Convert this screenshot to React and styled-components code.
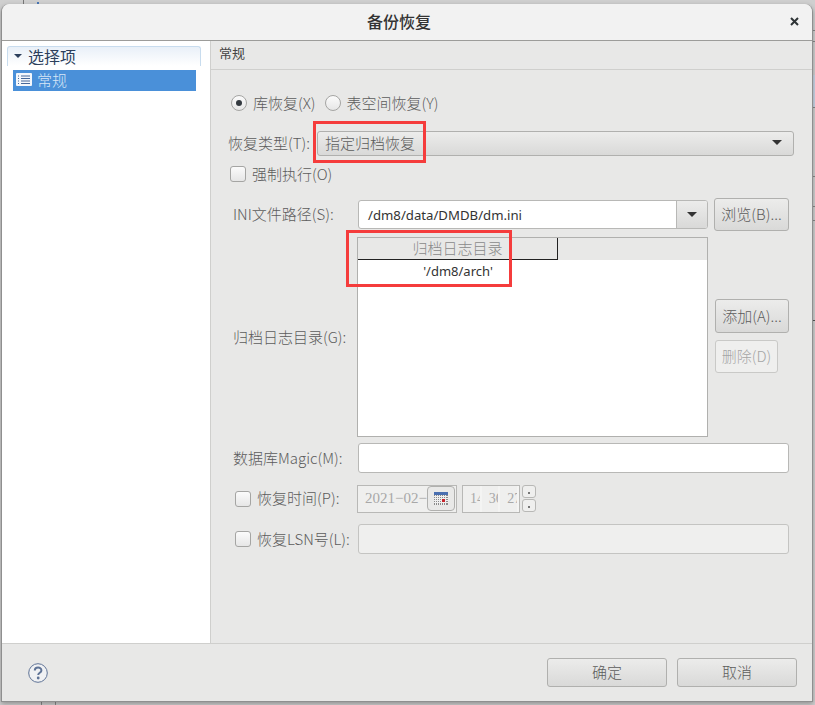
import React from 'react';
import styled, { createGlobalStyle } from 'styled-components';

const FONT = '"Noto Sans CJK SC", "Noto Sans", sans-serif';

const GlobalStyle = createGlobalStyle`
  html, body {
    margin: 0;
    padding: 0;
    width: 815px;
    height: 705px;
    overflow: hidden;
    background: #cfcfcf;
    font-family: ${FONT};
  }
  * { box-sizing: border-box; }
`;

// the window behind the dialog only shows as a few ticks round the edge
const tick = (color, x, y, w, h) =>
  `linear-gradient(${color}, ${color}) ${x}px ${y}px / ${w}px ${h}px no-repeat`;

const Page = styled.div`
  width: 815px;
  height: 705px;
  padding: 4px 0 0 1px;
  background:
    ${tick('#777', 23, 0, 1, 4)},
    ${tick('#4a78b8', 37, 2, 2, 2)},
    ${tick('#888', 41, 702, 1, 3)},
    ${tick('#888', 55, 702, 1, 3)},
    ${tick('#888', 813, 30, 2, 1)},
    ${tick('#888', 813, 41, 2, 1)},
    ${tick('#c9d4e4', 813, 75, 2, 32)},
    ${tick('#888', 813, 107, 2, 1)},
    ${tick('#888', 813, 176, 2, 1)},
    ${tick('#888', 813, 206, 2, 1)},
    ${tick('#888', 813, 220, 2, 1)},
    ${tick('#555', 813, 320, 2, 1)},
    #cfcfcf;
`;

const Dialog = styled.div`
  position: relative;
  width: 812px;
  height: 698px;
  display: flex;
  flex-direction: column;
  background: #e8e8e7;
  border: 1px solid #8f8f8f;
  border-top: none;
  border-radius: 8px 8px 0 0;
  box-shadow: 0 2px 5px rgba(0, 0, 0, 0.3);
  color: #5c5c5c;
  font-size: 15px;
  font-weight: 300;
`;

const TitleBar = styled.div`
  position: relative;
  height: 37px;
  flex: none;
  display: flex;
  align-items: center;
  justify-content: center;
  padding: 0 16px 2px 0;
  background: #f2f2f2;
  border-bottom: 1px solid #9c9c9a;
  border-radius: 8px 8px 0 0;
  font-size: 16px;
  font-weight: 500;
  color: #333;
`;

const CloseIcon = styled.svg`
  position: absolute;
  right: 13px;
  top: 13px;
`;

const Main = styled.div`
  flex: 1;
  display: flex;
  min-height: 0;
`;

const Side = styled.div`
  width: 209px;
  flex: none;
  background: #fff;
  border-right: 1px solid #cfcfcd;
  padding: 5px 9px 0 5px;
`;

const SideHeader = styled.div`
  height: 20px;
  display: flex;
  align-items: center;
  gap: 6px;
  padding: 0 0 2px 6px;
  border: 1px solid #c8dcee;
  border-bottom: none;
  border-radius: 3px 3px 0 0;
  background: linear-gradient(#e9f0f8, #fff);
  color: #2c3f5c;
  font-size: 16px;
  font-weight: 400;
`;

const Caret = styled.span`
  width: 0;
  height: 0;
  border-left: ${(p) => p.$size || 4}px solid transparent;
  border-right: ${(p) => p.$size || 4}px solid transparent;
  border-top: ${(p) => p.$size || 4}px solid ${(p) => p.$color || '#2c3f5c'};
`;

const SideItem = styled.div`
  height: 21px;
  margin: 4px 5px 0 6px;
  display: flex;
  align-items: center;
  gap: 5px;
  padding: 0 0 2px 3px;
  background: #4a90d9;
  color: #d8e6f6;
`;

const Content = styled.div`
  flex: 1;
  display: flex;
  flex-direction: column;
  min-width: 0;
`;

const ContentHeader = styled.div`
  height: 29px;
  flex: none;
  display: flex;
  align-items: center;
  padding: 0 0 6px 8px;
  border-bottom: 1px solid #cfcfcd;
  color: #444;
  font-size: 13px;
  font-weight: 400;
`;

const Form = styled.div`
  display: flex;
  flex-direction: column;
`;

const Row = styled.div`
  display: flex;
  align-items: center;
  height: ${(p) => p.$h}px;
  margin-top: ${(p) => p.$top}px;
  padding-left: ${(p) => p.$left}px;
`;

const Label = styled.span`
  width: ${(p) => (p.$w ? `${p.$w}px` : 'auto')};
  flex: none;
  padding-bottom: 2px;
  white-space: nowrap;
`;

const Option = styled.span`
  display: flex;
  align-items: center;
  gap: 6px;
  margin-right: 9px;
  white-space: nowrap;
`;

const Radio = styled.span`
  width: 16px;
  height: 16px;
  flex: none;
  display: flex;
  align-items: center;
  justify-content: center;
  border: 1px solid #a5a5a3;
  border-radius: 50%;
  background: linear-gradient(#fbfbfb, #e6e6e6);
  &::after {
    content: '';
    display: ${(p) => (p.$on ? 'block' : 'none')};
    width: 6px;
    height: 6px;
    border-radius: 50%;
    background: #33393f;
  }
`;

const Checkbox = styled.span`
  width: 16px;
  height: 16px;
  flex: none;
  border: 1px solid #a5a5a3;
  border-radius: 3px;
  background: linear-gradient(#fbfbfb, #e6e6e6);
`;

const Combo = styled.div`
  width: 477px;
  height: 25px;
  display: flex;
  align-items: center;
  justify-content: space-between;
  padding: 0 11px 2px 7px;
  border: 1px solid #b0b0ae;
  border-radius: 3px;
  background: linear-gradient(#ececeb, #d9d9d8);
`;

const InputGroup = styled.div`
  width: 350px;
  height: 29px;
  display: flex;
  border: 1px solid #b8b8b6;
  border-radius: 3px;
  overflow: hidden;
  background: #fff;
`;

const InputText = styled.div`
  flex: 1;
  display: flex;
  align-items: center;
  padding-left: 9px;
  color: #333;
  font-family: "Noto Sans", sans-serif;
  font-size: 13.2px;
  font-weight: 400;
`;

const DropButton = styled.div`
  width: 31px;
  display: flex;
  align-items: center;
  justify-content: center;
  border-left: 1px solid #b8b8b6;
  background: linear-gradient(#ececeb, #d9d9d8);
`;

const Button = styled.div`
  width: ${(p) => p.$w}px;
  height: ${(p) => p.$h}px;
  flex: none;
  display: flex;
  align-items: center;
  justify-content: center;
  padding-bottom: 2px;
  border: 1px solid ${(p) => (p.$disabled ? '#c9c9c7' : '#b0b0ae')};
  border-radius: 3px;
  background: ${(p) => (p.$disabled ? '#efefee' : 'linear-gradient(#ececeb, #d9d9d8)')};
  color: ${(p) => (p.$disabled ? '#a5a5a5' : '#5c5c5c')};
  white-space: nowrap;
  margin-left: ${(p) => p.$left || 0}px;
  margin-top: ${(p) => p.$top || 0}px;
`;

const ListTable = styled.div`
  width: 351px;
  height: 200px;
  flex: none;
  border: 1px solid #b0b0ae;
  background: #fff;
`;

const TableHead = styled.div`
  height: 22px;
  background: #e8e8e7;
`;

const HeadCell = styled.div`
  width: 200px;
  height: 22px;
  display: flex;
  align-items: center;
  justify-content: center;
  padding-bottom: 2px;
  border-right: 1px solid #222;
  border-bottom: 1px solid #222;
  color: #8a8a8a;
`;

const TableCell = styled.div`
  width: 200px;
  height: 22px;
  display: flex;
  align-items: center;
  justify-content: center;
  color: #333;
  font-family: "Noto Sans", sans-serif;
  font-size: 13px;
  font-weight: 400;
`;

const SideButtons = styled.div`
  align-self: flex-start;
  display: flex;
  flex-direction: column;
  align-items: flex-start;
  margin-left: 7px;
  padding-top: 62px;
`;

const TextField = styled.div`
  width: 431px;
  height: ${(p) => p.$h}px;
  flex: none;
  border: 1px solid ${(p) => (p.$disabled ? '#c4c4c2' : '#b8b8b6')};
  border-radius: 3px;
  background: ${(p) => (p.$disabled ? '#efefee' : '#fff')};
`;

const DateBox = styled.div`
  width: 100px;
  height: 28px;
  flex: none;
  display: flex;
  align-items: center;
  justify-content: space-between;
  padding: 0 1px 0 7px;
  border: 1px solid #b8b8b6;
  background: #efefee;
  color: #a8a8a8;
  font-family: "Liberation Serif", serif;
  font-size: 15px;
  font-weight: 400;
  white-space: nowrap;
  overflow: hidden;
`;

const DateButton = styled.div`
  width: 28px;
  height: 25px;
  flex: none;
  display: flex;
  align-items: center;
  justify-content: center;
  border: 1px solid #b0b0ae;
  border-radius: 4px;
  background: #e9e9e8;
`;

const TimeBox = styled.div`
  width: 58px;
  height: 28px;
  flex: none;
  margin-left: 5px;
  display: flex;
  border: 1px solid #b8b8b6;
  background: #f4f4f3;
`;

// the digits are clipped by their narrow cells in the original too
const TimeCell = styled.div`
  flex: 1;
  min-width: 0;
  margin-right: 2px;
  padding-left: 7px;
  overflow: hidden;
  display: flex;
  align-items: center;
  background: #efefee;
  color: #a8a8a8;
  font-family: "Liberation Serif", serif;
  font-size: 14px;
  font-weight: 400;
`;

const Spinner = styled.div`
  display: flex;
  flex-direction: column;
  gap: 1px;
  margin-left: 2px;
`;

const SpinButton = styled.div`
  width: 14px;
  height: 13px;
  display: flex;
  align-items: flex-end;
  justify-content: center;
  padding-bottom: 3px;
  border: 1px solid #b8b8b6;
  border-radius: 3px;
  background: #efefee;
  &::after {
    content: '';
    width: 2px;
    height: 2px;
    background: #777;
  }
`;

const Footer = styled.div`
  height: 58px;
  flex: none;
  display: flex;
  align-items: center;
  justify-content: space-between;
  padding: 0 15px 0 26px;
  border-top: 1px solid #cfcfcd;
`;

const FooterButtons = styled.div`
  display: flex;
  gap: 10px;
`;

const Annotation = styled.div`
  position: absolute;
  left: ${(p) => p.$x}px;
  top: ${(p) => p.$y}px;
  width: ${(p) => p.$w}px;
  height: ${(p) => p.$h}px;
  border: 3px solid #f53c3c;
`;

function ListIcon() {
  return (
    <svg width="16" height="13" viewBox="0 0 16 13">
      <rect width="16" height="13" rx="1" fill="#f4f7fb" />
      <path d="M2 3h1M5 3h9M2 5.5h1M5 5.5h9M2 8h1M5 8h9M2 10.5h1M5 10.5h9" stroke="#46689a" strokeWidth="1" />
    </svg>
  );
}

function CalendarIcon() {
  return (
    <svg width="14" height="13" viewBox="0 0 14 13">
      <rect width="14" height="3" fill="#4a6fb0" />
      <rect y="3" width="14" height="10" fill="#8a8a8a" />
      <path d="M0 4.5h14M0 6.5h14M0 8.5h14M0 10.5h14M1.5 3v10M3.5 3v10M5.5 3v10M7.5 3v10M9.5 3v10M11.5 3v10" stroke="#eee" strokeWidth="1" />
      <rect x="8" y="7" width="3" height="3" fill="#c8242c" />
    </svg>
  );
}

function HelpIcon() {
  return (
    <svg width="20" height="20" viewBox="0 0 20 20">
      <circle cx="10" cy="10" r="9.3" fill="#f0f1f3" stroke="#5f7396" strokeWidth="1" />
      <path d="M6.8 7.6c0-4 6.6-4 6.6-.2 0 2.4-3.2 2.4-3.2 4.6" fill="none" stroke="#5f7396" strokeWidth="2" />
      <circle cx="10.2" cy="15" r="1.4" fill="#5f7396" />
    </svg>
  );
}

export default function App() {
  return (
    <>
      <GlobalStyle />
      <Page>
        <Dialog>
          <TitleBar>
            备份恢复
            <CloseIcon width="9" height="9" viewBox="0 0 9 9">
              <path d="M1 1l7 7M8 1l-7 7" stroke="#2e3436" strokeWidth="2" />
            </CloseIcon>
          </TitleBar>
          <Main>
            <Side>
              <SideHeader>
                <Caret />
                选择项
              </SideHeader>
              <SideItem>
                <ListIcon />
                常规
              </SideItem>
            </Side>
            <Content>
              <ContentHeader>常规</ContentHeader>
              <Form>
                <Row $h={20} $top={23} $left={20}>
                  <Option>
                    <Radio $on />
                    <Label>库恢复(X)</Label>
                  </Option>
                  <Option>
                    <Radio />
                    <Label>表空间恢复(Y)</Label>
                  </Option>
                </Row>
                <Row $h={25} $top={18} $left={17}>
                  <Label $w={89}>恢复类型(T):</Label>
                  <Combo>
                    指定归档恢复
                    <Caret $size={5} $color="#333" />
                  </Combo>
                </Row>
                <Row $h={20} $top={8} $left={19}>
                  <Option>
                    <Checkbox />
                    <Label>强制执行(O)</Label>
                  </Option>
                </Row>
                <Row $h={33} $top={14} $left={22}>
                  <Label $w={125}>INI文件路径(S):</Label>
                  <InputGroup>
                    <InputText>/dm8/data/DMDB/dm.ini</InputText>
                    <DropButton>
                      <Caret $size={5} $color="#333" />
                    </DropButton>
                  </InputGroup>
                  <Button $w={75} $h={33} $left={6}>浏览(B)...</Button>
                </Row>
                <Row $h={200} $top={6} $left={22}>
                  <Label $w={124}>归档日志目录(G):</Label>
                  <ListTable>
                    <TableHead>
                      <HeadCell>归档日志目录</HeadCell>
                    </TableHead>
                    <TableCell>'/dm8/arch'</TableCell>
                  </ListTable>
                  <SideButtons>
                    <Button $w={74} $h={34}>添加(A)...</Button>
                    <Button $w={63} $h={33} $top={7} $disabled>删除(D)</Button>
                  </SideButtons>
                </Row>
                <Row $h={30} $top={6} $left={22}>
                  <Label $w={125}>数据库Magic(M):</Label>
                  <TextField $h={30} />
                </Row>
                <Row $h={29} $top={11} $left={24}>
                  <Option>
                    <Checkbox />
                    <Label $w={91}>恢复时间(P):</Label>
                  </Option>
                  <DateBox>
                    2021−02−
                    <DateButton>
                      <CalendarIcon />
                    </DateButton>
                  </DateBox>
                  <TimeBox>
                    <TimeCell>14</TimeCell>
                    <TimeCell>36</TimeCell>
                    <TimeCell>27</TimeCell>
                  </TimeBox>
                  <Spinner>
                    <SpinButton />
                    <SpinButton />
                  </Spinner>
                </Row>
                <Row $h={30} $top={11} $left={24}>
                  <Option>
                    <Checkbox />
                    <Label $w={92}>恢复LSN号(L):</Label>
                  </Option>
                  <TextField $h={30} $disabled />
                </Row>
              </Form>
            </Content>
          </Main>
          <Footer>
            <HelpIcon />
            <FooterButtons>
              <Button $w={120} $h={29}>确定</Button>
              <Button $w={120} $h={29}>取消</Button>
            </FooterButtons>
          </Footer>
          <Annotation $x={311} $y={117} $w={113} $h={42} />
          <Annotation $x={344} $y={226} $w={166} $h={57} />
        </Dialog>
      </Page>
    </>
  );
}
